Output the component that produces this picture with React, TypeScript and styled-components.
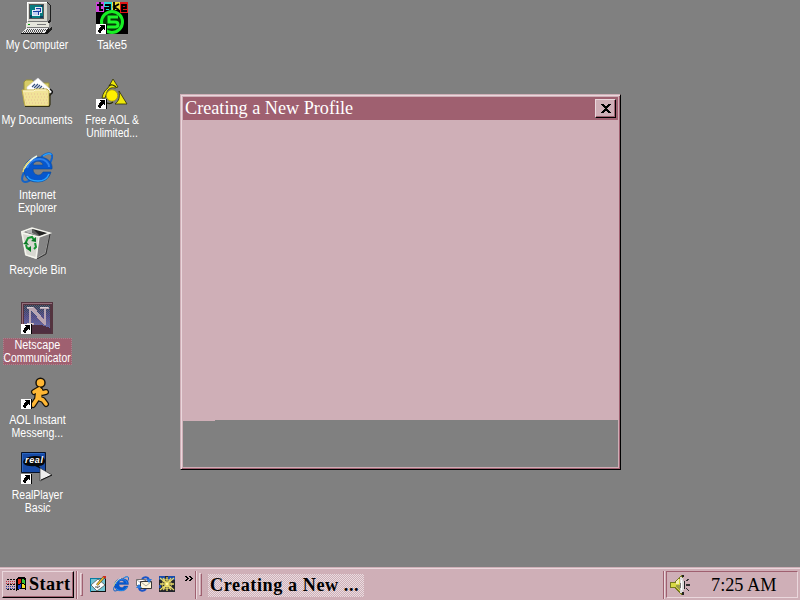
import React from 'react';
import styled, { createGlobalStyle } from 'styled-components';

const pink = '#cfafb7';
const pale = '#ead7dc';
const rose = '#9f6070';

const GlobalStyle = createGlobalStyle`
  * { box-sizing: border-box; }
  html, body { margin: 0; padding: 0; overflow: hidden; background: #808080; }
`;

const Screen = styled.div`
  display: grid;
  grid-template-rows: 567px 33px;
  width: 800px;
  height: 600px;
  background: #808080;
  overflow: hidden;
  cursor: default;
`;
const Desktop = styled.main`
  display: flex;
  align-items: flex-start;
`;
const IconColumn = styled.div`
  display: flex;
  flex-direction: column;
  width: 75px;
`;
const Shortcut = styled.div`
  display: flex;
  flex-direction: column;
  align-items: center;
  width: 75px;
  height: 75px;
  padding-top: 2px;
`;
const Art = styled.svg`
  display: block;
  flex: none;
  width: 32px;
  height: 32px;
  margin-right: 1px;
`;
const Caption = styled.div<{ $selected?: boolean }>`
  display: flex;
  flex-direction: column;
  align-items: center;
  width: ${p => (p.$selected ? '69px' : '75px')};
  margin-top: 4px;
  padding-top: 1px;
  color: white;
  background: ${p => (p.$selected ? rose : 'transparent')};
  outline: ${p => (p.$selected ? '1px dotted #a8848d' : 'none')};
  outline-offset: -1px;
`;
const CaptionLine = styled.span<{ $stretch: number }>`
  font: 12px/13px "Liberation Sans", Arial, sans-serif;
  white-space: nowrap;
  transform: scaleX(${p => p.$stretch});
`;

const Window = styled.section`
  display: grid;
  grid-template-rows: 23px 300px 1fr;
  width: 441px;
  height: 376px;
  margin: 94px 0 0 30px;
  padding: 2px;
  border: 1px solid;
  border-color: ${pink} #000 #000 ${pink};
  box-shadow: inset 1px 1px ${pale}, inset -1px -1px ${rose}, inset 2px 2px ${pink}, inset -2px -2px ${pink};
`;
const TitleBar = styled.header`
  display: flex;
  justify-content: space-between;
  align-items: flex-start;
  padding: 1px 2px 0;
  background: ${rose};
  color: white;
  font: 18.2px/20px "Liberation Serif", "Times New Roman", serif;
`;
const CloseButton = styled.button`
  display: grid;
  place-items: center;
  width: 21px;
  height: 19px;
  margin-top: 1px;
  padding: 0;
  border: 1px solid;
  border-color: ${pale} #000 #000 ${pale};
  box-shadow: inset -1px -1px ${rose};
  background: ${pink};
`;
const Pane = styled.div`
  background: ${pink};
`;
const Unpainted = styled.div`
  display: flex;
  align-items: flex-start;
`;
const PaintedEdge = styled.div`
  width: 32px;
  height: 1px;
  background: ${pink};
`;

const Taskbar = styled.footer`
  display: flex;
  align-items: stretch;
  padding: 4px 2px 1px;
  background: ${pink};
  box-shadow: inset 0 1px ${pink}, inset 0 2px ${pale};
`;
const StartButton = styled.button`
  display: flex;
  align-items: center;
  gap: 3px;
  width: 72px;
  height: 27px;
  padding: 0 0 1px 3px;
  border: 1px solid;
  border-color: ${pale} #000 #000 ${pale};
  box-shadow: inset -1px -1px ${rose};
  background: ${pink};
  color: black;
  font: bold 18.2px/24px "Liberation Serif", "Times New Roman", serif;
  letter-spacing: 0.4px;
`;
const BandGroup = styled.div`
  display: flex;
  margin-left: 2px;
`;
const Divider = styled.i`
  width: 2px;
  height: 28px;
  border-left: 1px solid ${rose};
  border-right: 1px solid ${pale};
`;
const Grip = styled.i`
  width: 3px;
  height: 23px;
  margin: 2px 0 0 2px;
  border: 1px solid;
  border-color: ${pale} ${rose} ${rose} ${pale};
`;
const QuickLaunch = styled.nav`
  display: flex;
  gap: 7px;
  width: 112px;
  padding: 5px 0 0 7px;
`;
const SmallArt = styled.svg`
  display: block;
  flex: none;
  width: 16px;
  height: 16px;
`;
const Chevron = styled.svg`
  flex: none;
  width: 9px;
  height: 5px;
  margin-left: 3px;
`;
const TaskButton = styled.button`
  width: 156px;
  height: 23px;
  margin: 3px 0 0 6px;
  padding: 0 0 1px 2px;
  border: 0;
  background: repeating-conic-gradient(${pink} 0 25%, #e9dce0 0 50%) 0 0 / 2px 2px;
  color: black;
  text-align: left;
  white-space: nowrap;
  font: bold 18.2px/22px "Liberation Serif", "Times New Roman", serif;
  letter-spacing: 0.56px;
`;
const TrayGroup = styled.div`
  display: flex;
  margin-left: auto;
`;
const Tray = styled.div`
  display: flex;
  align-items: center;
  width: 132px;
  height: 27px;
  margin-left: 1px;
  padding-left: 3px;
  border: 1px solid;
  border-color: ${rose} ${pale} ${pale} ${rose};
  color: black;
`;
const Clock = styled.time`
  margin-left: 19px;
  font: 18.3px/22px "Liberation Serif", "Times New Roman", serif;
`;

const LinkArrow = () => (
  <g shapeRendering="crispEdges">
    <path fill="#fff" d="M0 22h10v10H0z" />
    <path fill="#000" d="M10 22h1v11H0v-1h10zM4 23h5v5H8v-1H7v1H6v1H5v2H3v-1H2v-2h1v-2h1v-1h1v-1H4z" />
  </g>
);

const ComputerArt = () => (
  <Art viewBox="0 0 32 32" shapeRendering="crispEdges">
    <path fill="#202020" d="M26 0l4 3v16l1 2v6l-4 5H1v-1l25-3V19z" />
    <path fill="#888" d="M26 1l3 2v15l-3 2zM28 21l3-2v6l-3 2z" />
    <path fill="#d8d8d0" d="M6 0h20v20H6z" />
    <path fill="#fff" d="M6 0h20v1H7v18H6z" />
    <path fill="#555" d="M8 2h15v15H8z" />
    <path fill="#087c80" d="M9 3h13v13H9z" />
    <path fill="#084060" d="M9 13h2v3H9zM20 3h2v2h-2zM19 14h3v2h-3z" />
    <path fill="#e8edf8" d="M14 5h7v6h-7zM11 8h8v6h-8z" />
    <path fill="#173da4" d="M15 6h5v4h-5zM12 9h6v4h-6z" />
    <path fill="#c3cff0" d="M15 7h4v2h-4zM12 10h5v3h-5z" />
    <path fill="#e6e6dc" d="M7 20h19l2 1v5H5v-5z" />
    <path fill="#777" d="M6 25h22v1H6zM7 19h19v1H7zM16 22h9v1h-9z" />
    <path fill="#00a000" d="M7 22h2v1H7z" />
    <path fill="#eee" d="M5 26h22l-3 5H0z" />
    <path fill="none" stroke="#555" strokeDasharray="1 1" d="M6 27.5h19M5 28.5h19M3 29.5h20M2 30.5h20" />
    <path fill="#111" d="M0 31h25l3-4v2l-3 3H0z" />
  </Art>
);
const DocumentsArt = () => (
  <Art viewBox="0 0 32 32">
    <path fill="#d7cc67" stroke="#98913d" d="M3 26V5l2-2h6l3 3h14v22H4z" />
    <path fill="#fff" stroke="#d9d9df" strokeWidth=".6" d="M6 10L17 1l14 13-8 10L6 14z" />
    <path d="M29 12l3 3-4 4" fill="none" stroke="#111" strokeWidth="1.3" />
    <path stroke="#345080" strokeWidth="1.2" d="M11 10l3-3M13 11l4-4M15 12l4-4M18 12l3-3M21 13l2-2" />
    <path fill="#f1e398" stroke="#c0ae4d" d="M1 13h12l1-1h12l2 2v15H4z" />
    <path fill="none" stroke="#fff7ce" d="M2 14h11l1-1h11" />
    <path stroke="#e7bd94" strokeDasharray="1 2" d="M4 17h23M5 20h22M4 23h24M5 26h22" />
    <path fill="none" stroke="#333013" strokeWidth="1.2" d="M4 29.5h24l1-2V16" />
  </Art>
);
const ExplorerShapes = () => (
  <>
    <path fill="none" stroke="#1463c7" strokeWidth="2" d="M20 5c8-6 12-4 11 1-1 4-2 5-3 7M5 18c-5 6-5 12-1 12 3 0 6-2 9-5" />
    <path fill="#0757cd" stroke="#06499c" strokeWidth=".6" fillRule="evenodd" d="M31 17H12c0 7 8 8 10 3h8c-2 7-7 10-14 10C7 30 3 25 3 18S9 5 18 5s14 6 13 12zm-19-4h10c-1-5-9-5-10 0z" />
    <path fill="none" stroke="#2e81ea" strokeWidth="2" d="M6 16C8 10 13 7 19 7c5 0 9 4 9 8" />
    <path fill="none" stroke="#28a3ff" strokeWidth="1.4" d="M22 4c4-3 8-3 8-1M6 24c2 4 6 5 11 5 5 0 9-2 11-7" />
    <path fill="none" stroke="#eef8e8" strokeWidth="1.6" d="M3 17C6 11 10 7 16 4" />
    <path fill="none" stroke="#e4d66a" strokeWidth="1.4" d="M2 20c1-5 4-9 7-11" />
  </>
);
const ExplorerArt = () => <Art viewBox="0 0 32 32"><ExplorerShapes /></Art>;
const RecycleArt = () => (
  <Art viewBox="0 0 32 32">
    <path fill="#d8d8d1" d="M0 5l10-4 19 5-5 20-9 6-11-4z" />
    <path fill="#858585" d="M18 10l11-4-5 20-8 5z" />
    <path fill="#5d5d5d" d="M3 5l8-4 16 5-9 4z" />
    <path fill="#242424" d="M11 1l16 5-8 3z" />
    <path fill="#b6b6b6" d="M11 1v5l7 3-14-4z" />
    <path fill="none" stroke="#f5f5ee" strokeWidth="1.4" d="M0 5l11-4 18 5-11 4L1 6l4 22 10 3 3-21" />
    <path fill="none" stroke="#333" d="M29 7l-4 20-9 5" />
    <path fill="none" stroke="#159532" strokeWidth="2" d="M5 15l2-4 4-1 2 3M14 16l1 4-2 2M9 22l-3-1-1-3" />
    <path fill="#087924" d="M15 10v5l-5-1zM10 19v6l-4-3zM2 17l3-3 3 4z" />
  </Art>
);
const NetscapeArt = () => (
  <Art viewBox="0 0 32 32" shapeRendering="crispEdges">
    <defs>
      <linearGradient id="nightSky" x2="0" y2="1"><stop stopColor="#1f4655" /><stop offset=".5" stopColor="#3c4a96" /><stop offset="1" stopColor="#5f76c0" /></linearGradient>
      <pattern id="checks" width="2" height="2" patternUnits="userSpaceOnUse"><path fill="#855c70" fillOpacity=".7" d="M0 0h1v1H0zM1 1h1v1H1z" /></pattern>
    </defs>
    <path fill="#54343f" d="M0 0h32v32H0z" />
    <path fill="#946e7b" d="M1 1h30v1H2v29H1z" />
    <path fill="url(#nightSky)" d="M3 3h26v23H3z" />
    <path fill="url(#checks)" d="M3 3h26v23H3z" />
    <path fill="#4f2f41" d="M2 26l8-3h10l10 3v5H2z" />
    <path fill="#b9a6b3" d="M6 5h7l10 13V7h-4V5h9v2h-3v16h-2L10 8v13h3v2H6v-2h2V7H6z" />
    <path fill="#d8ced3" d="M6 5h6v1H6zM19 5h8v1h-8zM6 21h6v1H6z" />
    <LinkArrow />
  </Art>
);
const RunnerArt = () => (
  <Art viewBox="0 0 32 32">
    <g fill="none" stroke="#17120a" strokeWidth="6" strokeLinecap="round" strokeLinejoin="round">
      <path d="M18 12l-5 3M19 13l2 3 4-1M17 14l-1 8-4 6M17 21l5 2 3 4" />
    </g>
    <circle cx="19.5" cy="5.8" r="4.5" fill="#ffb735" stroke="#17120a" strokeWidth="1.5" />
    <g fill="none" stroke="#ffb735" strokeWidth="3.6" strokeLinecap="round" strokeLinejoin="round">
      <path d="M18 12l-5 3M19 13l2 3 4-1M17 14l-1 8-4 6M17 21l5 2 3 4" />
    </g>
    <path fill="#ffb735" d="M15 12h6l-1 11h-5z" />
    <LinkArrow />
  </Art>
);
const RealArt = () => (
  <Art viewBox="0 0 32 32">
    <path fill="#174aa5" stroke="#07132a" d="M.5.5h24v20H.5z" />
    <path fill="#2b65bd" d="M1 1h22v1H2v18H1z" />
    <path fill="#050709" d="M3 8c3-5 18-5 20-2 3 5-1 8-5 8l2 3-6-3C6 15 0 12 3 8z" />
    <text x="4" y="11" fill="#fff" fontFamily="Liberation Sans" fontSize="9" fontWeight="bold" fontStyle="italic" textLength="18">real</text>
    <path fill="#eee" stroke="#333" strokeWidth=".7" d="M19 16l12 7-12 6z" />
    <path fill="none" stroke="#111" d="M20 28l11-5" />
    <LinkArrow />
  </Art>
);
const TakeArt = () => (
  <Art viewBox="0 0 32 32">
    <path fill="#000" d="M0 0h32v32H0z" />
    <path fill="#cf46dc" d="M0 0h8v10H0z" />
    <path fill="#28d6dc" d="M8 0h8v9H8z" />
    <path fill="#f0dc36" d="M16 0h8v8h-8z" />
    <path fill="#dc1616" d="M24 0h8v11h-8z" />
    <path fill="none" stroke="#000" strokeWidth="1.8" d="M4 0v8h3M1 3h6M9 3h5v6H9V6h5M18 0v9M23 2l-5 3 5 3M26 6h4V3h-4v6h5" />
    <circle cx="16" cy="20" r="10.5" fill="#053707" stroke="#16ef24" strokeWidth="3" />
    <path fill="none" stroke="#1df42a" strokeWidth="3" d="M22 15h-9v5h6c4 0 4 5 0 5h-8" />
    <LinkArrow />
  </Art>
);
const AolArt = () => (
  <Art viewBox="0 0 32 32">
    <path fill="#eee808" stroke="#292b09" strokeWidth=".8" d="M17 2l5 8-3 1c-4-1-7 1-8 4l-2 6H6c1-5 3-8 6-10zM23 14l8 13H19c4-3 5-7 4-13z" />
    <circle cx="16" cy="18.5" r="5.7" fill="#fff000" stroke="#99920b" strokeWidth=".7" />
    <path fill="none" stroke="#292b09" strokeWidth="1.1" d="M13 9c2-2 5-1 7 1M9 25c3 2 6 2 8 0" />
    <LinkArrow />
  </Art>
);

const FlagArt = () => (
  <svg width="20" height="16" viewBox="0 0 20 16" shapeRendering="crispEdges">
    <path fill="#000" d="M10 3l3-2h4l3 1v12l-2-1h-4l-4 2z" />
    <path fill="#e12612" d="M12 3h3v4l-3 1z" />
    <path fill="#35c535" d="M16 3l3 1v4l-3-1z" />
    <path fill="#173bce" d="M12 9l3-1v4l-3 1z" />
    <path fill="#f2df25" d="M16 8l3 1v3h-3z" />
    <path stroke="#111" strokeDasharray="2 1" d="M1 3.5h9M1 8.5h9M1 13.5h9" />
    <path stroke="#bf303f" strokeDasharray="1 1" d="M0 5.5h10M0 7.5h10" />
    <path stroke="#293fa0" strokeDasharray="1 1" d="M0 10.5h10M0 12.5h10" />
  </svg>
);
const NoteArt = () => (
  <SmallArt viewBox="0 0 16 16">
    <path fill="#087ca2" d="M0 2h16v14H0z" />
    <path fill="#72c3d3" d="M1 3h14v12H1z" />
    <path fill="#fff" stroke="#444" strokeWidth=".7" d="M1 9l7-6 7 6-8 6z" />
    <path stroke="#493a26" strokeWidth="2.4" d="M7 9l7-8" />
    <path stroke="#eec02c" strokeWidth="1.4" d="M7 9l7-8" />
    <path fill="#c92a20" d="M13 0h3v2l-1 1-2-2z" />
    <path stroke="#555" d="M5 11h3m-1 1l3-2" />
    <path fill="#111" d="M1 15h15v1H1zM15 3h1v13h-1z" />
  </SmallArt>
);
const MailArt = () => (
  <SmallArt viewBox="0 0 16 16">
    <path fill="none" stroke="#1954c8" strokeWidth="2" d="M6 3c3-3 7-2 7 2M10 13c-3 3-7 2-7-2" />
    <path fill="#fff" stroke="#555" strokeWidth=".8" d="M.5 3.5h9v6h-9z" />
    <path fill="none" stroke="#888" strokeWidth=".7" d="M1 4l4 3 4-3" />
    <path fill="#fff8dd" stroke="#222" strokeWidth=".9" d="M4.5 5.5h11v7h-11z" />
    <path fill="none" stroke="#888" strokeWidth=".7" d="M5 6l5 4 5-4" />
    <path fill="#2778dc" d="M10 3h6l-3 4zM0 12l3-4 3 4z" />
  </SmallArt>
);
const BurstArt = () => (
  <SmallArt viewBox="0 0 16 16">
    <path fill="#23252c" d="M0 0h16v16H0z" />
    <path fill="#194cac" d="M0 0h6v4H0zM9 0h7v4H9zM0 9h2v3H0z" />
    <path stroke="#e8d968" strokeWidth="1.3" d="M1 2l14 12M15 2L1 14M8 1v14M1 8h14M4 2l8 12M12 2L4 14" />
    <path fill="none" stroke="#e8d968" strokeWidth=".8" d="M5 3l5 1 3 4-2 4-6 1-2-4z" />
    <path fill="#fff7a2" d="M7 7h2v2H7z" />
  </SmallArt>
);
const SpeakerArt = () => (
  <svg width="22" height="22" viewBox="0 0 22 22" shapeRendering="crispEdges">
    <path fill="#77791f" d="M0 8h4l7-7h2v20h-2l-7-7H0z" />
    <path fill="#d8d943" d="M1 9h4l5-5v13l-5-4H1z" />
    <path fill="#f4efab" d="M6 7l3-3v6H6z" />
    <path fill="#9d9c48" d="M6 11h4v6l-4-4z" />
    <path fill="#222" d="M12 1h2v2h-2zM12 18h2v3h-2zM14 7h1v8h-1z" />
    <path fill="#ddd" d="M10 3h2l2 5v7l-2 4h-2z" />
    <path fill="#fff" d="M11 6h1v10h-1z" />
    <path fill="#777" d="M10 9h1v5h-1z" />
    <path stroke="#333" strokeWidth="1.3" d="M16 7l3-2M16 11h4M16 14l3 3" />
  </svg>
);

type Line = [text: string, stretch: number];
type Item = { Picture: () => React.ReactElement; lines: Line[]; selected?: boolean };
const columns: Item[][] = [
  [
    { Picture: ComputerArt, lines: [['My Computer', 0.865]] },
    { Picture: DocumentsArt, lines: [['My Documents', 0.89]] },
    { Picture: ExplorerArt, lines: [['Internet', 0.9], ['Explorer', 0.87]] },
    { Picture: RecycleArt, lines: [['Recycle Bin', 0.9]] },
    { Picture: NetscapeArt, lines: [['Netscape', 0.9], ['Communicator', 0.86]], selected: true },
    { Picture: RunnerArt, lines: [['AOL Instant', 0.9], ['Messeng...', 0.88]] },
    { Picture: RealArt, lines: [['RealPlayer', 0.87], ['Basic', 0.88]] },
  ],
  [
    { Picture: TakeArt, lines: [['Take5', 0.94]] },
    { Picture: AolArt, lines: [['Free AOL &', 0.86], ['Unlimited...', 0.86]] },
  ],
];

export default function App() {
  return (
    <>
      <GlobalStyle />
      <Screen>
        <Desktop>
          {columns.map((items, i) => (
            <IconColumn key={i}>
              {items.map(({ Picture, lines, selected }) => (
                <Shortcut key={lines[0][0]}>
                  <Picture />
                  <Caption $selected={selected}>
                    {lines.map(([text, stretch]) => (
                      <CaptionLine key={text} $stretch={stretch}>{text}</CaptionLine>
                    ))}
                  </Caption>
                </Shortcut>
              ))}
            </IconColumn>
          ))}
          <Window>
            <TitleBar>
              <span>Creating a New Profile</span>
              <CloseButton aria-label="Close">
                <svg width="10" height="9" viewBox="0 0 10 9" shapeRendering="crispEdges">
                  <path d="M0 0h3v1h1v1h2V1h1V0h3v1H9v1H8v1H7v1H6v1h1v1h1v1h1v1h1v1H7V8H6V7H4v1H3v1H0V8h1V7h1V6h1V5h1V4H3V3H2V2H1V1H0z" />
                </svg>
              </CloseButton>
            </TitleBar>
            <Pane />
            <Unpainted><PaintedEdge /></Unpainted>
          </Window>
        </Desktop>
        <Taskbar>
          <StartButton><FlagArt />Start</StartButton>
          <BandGroup>
            <Divider />
            <Grip />
            <QuickLaunch>
              <NoteArt />
              <SmallArt viewBox="0 0 32 32"><ExplorerShapes /></SmallArt>
              <MailArt />
              <BurstArt />
              <Chevron viewBox="0 0 9 5" shapeRendering="crispEdges">
                <path d="M0 0h2v1h1v1h1v1H3v1H2v1H0V4h1V3h1V2H1V1H0zM4 0h2v1h1v1h1v1H7v1H6v1H4V4h1V3h1V2H5V1H4z" />
              </Chevron>
            </QuickLaunch>
            <Divider />
            <Grip />
          </BandGroup>
          <TaskButton>Creating a New ...</TaskButton>
          <TrayGroup>
            <Divider />
            <Tray><SpeakerArt /><Clock>7:25 AM</Clock></Tray>
          </TrayGroup>
        </Taskbar>
      </Screen>
    </>
  );
}
